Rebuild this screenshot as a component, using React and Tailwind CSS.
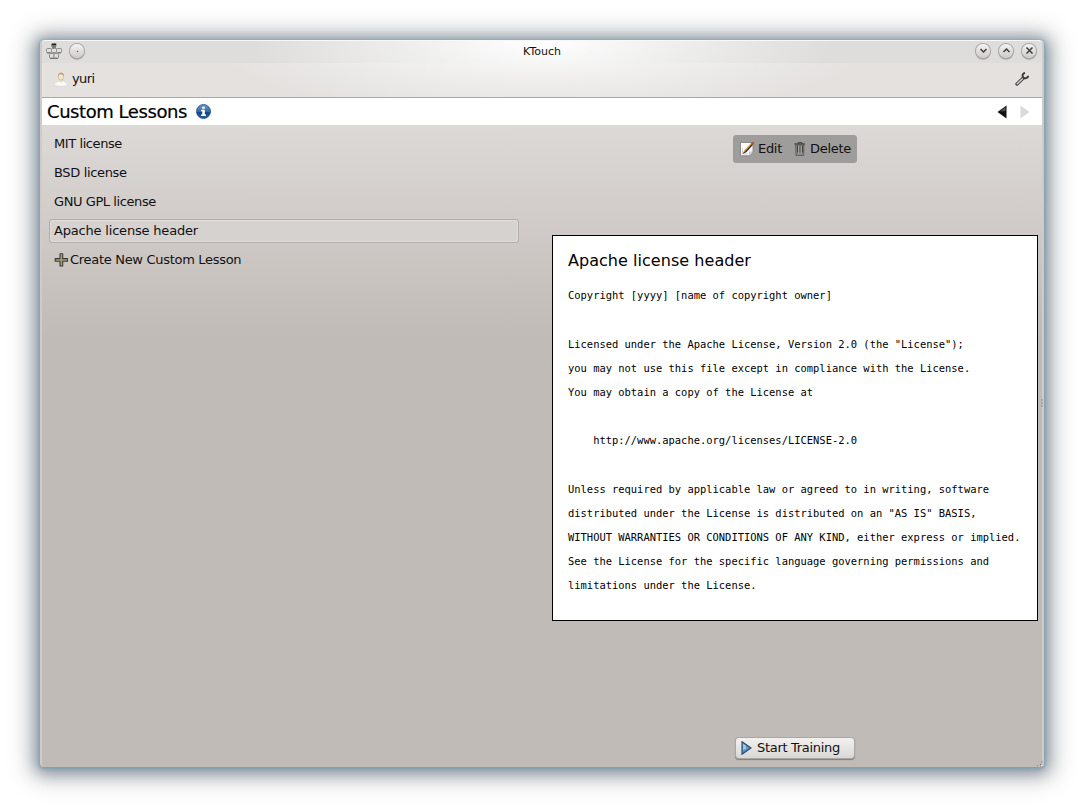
import React from "react";

const lessons = [
  { name: "MIT license", tracking: "tracking-[-0.42px]" },
  { name: "BSD license", tracking: "tracking-[-0.35px]" },
  { name: "GNU GPL license", tracking: "tracking-[-0.42px]" },
  { name: "Apache license header", tracking: "tracking-[-0.19px]", selected: true },
];

const licenseText = `Copyright [yyyy] [name of copyright owner]

Licensed under the Apache License, Version 2.0 (the "License");
you may not use this file except in compliance with the License.
You may obtain a copy of the License at

    http://www.apache.org/licenses/LICENSE-2.0

Unless required by applicable law or agreed to in writing, software
distributed under the License is distributed on an "AS IS" BASIS,
WITHOUT WARRANTIES OR CONDITIONS OF ANY KIND, either express or implied.
See the License for the specific language governing permissions and
limitations under the License.`;

function TitleButton({ children }) {
  return (
    <button className="flex size-[14px] items-center justify-center rounded-full bg-linear-to-b from-[#f4f3f3] to-[#cecbc9] shadow-[0_0_0_1px_#aaa8a7,0_1px_1px_0.5px_#8d8b8a]">
      <svg width="15" height="15" viewBox="0 0 15 15" fill="none" stroke="#3c3c3c" strokeWidth="1.5" className="shrink-0">
        {children}
      </svg>
    </button>
  );
}

function KeyboardIcon() {
  return (
    <svg width="16" height="16" viewBox="0 0 16 16" fill="#e0dfde" stroke="#8e8c89" strokeWidth="1">
      <path d="M6 .5h4v2L9 5H7L5.500 2.500Z" fill="#77756f" stroke="#777570" />
      <path d="M6 1.500h4" stroke="#222" />
      <rect x="0.5" y="5.5" width="5" height="4" rx="0.8" />
      <rect x="5.5" y="5.5" width="5" height="4" rx="0.8" />
      <rect x="10.5" y="5.5" width="5" height="4" rx="0.8" />
      <rect x="3.5" y="10.5" width="4.5" height="4.500" rx="0.8" />
      <rect x="8" y="10.5" width="4.5" height="4.500" rx="0.8" />
      <path d="M1 10h3M12 10h3M4 15.500h8" stroke="#777572" />
    </svg>
  );
}

function UserIcon() {
  return (
    <svg width="14" height="16" viewBox="0 0 14 16">
      <path d="M.5 14.800C.5 11 4 10.500 5.500 9.800h3C10 10.500 13.500 11 13.500 14.800Q7 16 .5 14.800Z" fill="#fafafa" stroke="#d2d0cd" strokeWidth="0.6" />
      <path d="M5.600 8h2.800v2.500L7 12l-1.400-1.500Z" fill="#eadfc6" />
      <ellipse cx="7" cy="5.500" rx="2.700" ry="3.700" fill="#f3e7cf" stroke="#c5b182" strokeWidth="0.700" />
      <path d="M4.300 5.500C3.500.6 10.500.3 9.800 5.500 9 3 6.500 3.500 5.500 3.300Z" fill="#b49d68" />
    </svg>
  );
}

function InfoIcon() {
  return (
    <svg width="15" height="15" viewBox="0 0 15 15">
      <defs>
        <linearGradient id="info" x2="0" y2="1">
          <stop stopColor="#6b9cc0" />
          <stop offset="0.5" stopColor="#336e9e" />
          <stop offset="0.55" stopColor="#15477f" />
          <stop offset="1" stopColor="#28609c" />
        </linearGradient>
      </defs>
      <circle cx="7.500" cy="7.500" r="7" fill="url(#info)" stroke="#1c4a7c" strokeWidth="0.8" />
      <path d="M6.200 2.700h2.600v2H6.200ZM5 5.700h3.800v4.800H10V12H5v-1.500h1.300V7.200H5Z" fill="#fff" />
    </svg>
  );
}

function WrenchIcon() {
  return (
    <svg width="14" height="14" viewBox="0 0 14 14" fill="none">
      <path d="M2 12 8 6.200" stroke="#444" strokeWidth="3.300" strokeLinecap="round" />
      <path d="M2.200 11.800 8.300 6" stroke="#d6d5d3" strokeWidth="1.400" strokeLinecap="round" />
      <path d="M10 1C8 1.200 7.300 3 7.700 4.300 8 6 9.500 6.700 11 6.100 12.400 5.700 13.100 4.900 13.200 3.800" stroke="#3b3b3b" strokeWidth="1.900" />
    </svg>
  );
}

function EditIcon() {
  return (
    <svg width="16" height="16" viewBox="0 0 16 16">
      <path d="M1.500 1.500h12.500v9.500l-3.500 3.800h-9Z" fill="#fafafa" stroke="#787878" strokeWidth="0.8" />
      <path d="M10.500 14.800V11H14Z" fill="#e4e4e4" stroke="#999" strokeWidth="0.500" />
      <path d="M3.500 7v6h4M6 13h3" stroke="#d5d5d5" fill="none" />
      <path d="M3.700 13 5.500 9.500l7-7.300 1.700 1.400L7.500 11Z" fill="#2d2419" />
      <path d="m5 10.700 7.500-8.200" stroke="#dba24c" strokeWidth="1.300" />
      <path d="m12 2 1.500-1.300 1.700.3-.2 1.500-1.600 1.600Z" fill="#a65d2b" />
    </svg>
  );
}

function TrashIcon() {
  return (
    <svg width="12" height="14" viewBox="0 0 12 14" fill="none">
      <path d="M4 1.500V.6h4v.9" stroke="#444" />
      <path d="M.5 2h10.500" stroke="#333" strokeWidth="1.200" />
      <path d="M1.700 3h8.300l-.3 10.500H2Z" fill="#858583" stroke="#555" strokeWidth="0.8" />
      <path d="M3.500 3.500v7M6 3.500v7M8.500 3.500v7" stroke="#3c3c3c" strokeWidth="0.900" />
      <path d="M4.700 3.500V12M7.200 3.500V12" stroke="#adadab" strokeWidth="0.800" />
    </svg>
  );
}

export default function App() {
  return (
    <div className="h-[807px] w-[1084px] overflow-hidden bg-white p-10 font-['DejaVu_Sans',sans-serif] text-[13px] text-[#111]">
      <div className="relative flex h-[727px] w-[1004px] flex-col rounded-[4px] border-x-2 border-l-[#cfcbc8] border-r-[#cfcbc8] bg-[#c1bbb7] bg-[linear-gradient(to_bottom,#dedddb_0px,#e4e1df_58px,#dcd9d7_86px,#d3cecc_165px,#c5bfbb_265px,#c1bbb7_300px)] shadow-[0_1px_3px_1px_#7fa1b4,0_2px_15px_4px_rgba(75,98,118,0.6),0_2px_26px_10px_rgba(0,0,0,0.2)]">
        <header className="flex h-[23px] shrink-0 items-start rounded-t-[4px] border-t border-[#f8f8f8] bg-[#dfdddc] bg-[radial-gradient(ellipse_290px_90px_at_50%_0,#ffffff,#ededec_50%,transparent)] px-1">
          <div className="flex h-[20px] w-[80px] items-center gap-[8px]">
            <KeyboardIcon />
            <TitleButton><circle cx="7.500" cy="7.500" r="0.700" fill="#555" stroke="none" /></TitleButton>
          </div>
          <div className="flex-1 text-center text-[11px] leading-[22px]">KTouch</div>
          <div className="flex h-[19px] w-[80px] items-center justify-end gap-[9px] pr-[2px]">
            <TitleButton><path d="m4.500 6 3 3 3-3" /></TitleButton>
            <TitleButton><path d="m4.500 9 3-3 3 3" /></TitleButton>
            <TitleButton><path d="m4.500 4.500 6 6m0-6-6 6" /></TitleButton>
          </div>
        </header>

        <div className="flex h-[35px] shrink-0 items-start justify-between border-b border-[#aaa8a6] bg-[#e4e1df] bg-[radial-gradient(ellipse_330px_75px_at_50%_-20px,#ffffff,#efeeed_50%,transparent)] pr-[13px] pl-[12px]">
          <div className="flex h-[31px] items-center gap-[4px]">
            <UserIcon />
            <span className="tracking-[-0.6px]">yuri</span>
          </div>
          <div className="flex h-[31px] items-center"><WrenchIcon /></div>
        </div>

        <div className="flex h-[27px] shrink-0 items-center justify-between bg-white pr-[12px] pl-[5px]">
          <div className="flex items-center gap-[9px] text-black">
            <h1 className="text-[18px] leading-[26px] tracking-[-0.44px] [-webkit-text-stroke:0.2px_black]">Custom Lessons</h1>
            <InfoIcon />
          </div>
          <div className="flex items-center gap-[13px]">
            <svg width="10" height="14" viewBox="0 0 10 14">
              <path d="M.5 7 9.500.5v13Z" fill="#111" />
              <path d="M3 6.500 8.500 2v4Z" fill="#555" />
            </svg>
            <svg width="10" height="14" viewBox="0 0 10 14">
              <path d="M.5.5 9.500 7l-9 6.500Z" fill="#dadada" />
            </svg>
          </div>
        </div>

        <main className="flex min-h-0 flex-1">
          <ul className="flex w-[510px] flex-col gap-[5px] pt-[7px] pl-[7px]">
            {lessons.map(({ name, tracking, selected }) => (
              <li
                key={name}
                className={
                  selected
                    ? "flex h-6 w-[470px] items-center rounded-[3px] border border-[#b0acaa] bg-[#d6d2d0] px-1 shadow-[inset_0_0_0_1px_#dfdcda]"
                    : "flex h-6 w-[470px] items-center px-[5px]"
                }
              >
                <span className={tracking}>{name}</span>
              </li>
            ))}
            <li className="flex h-6 items-center gap-[1px] pl-[5px]">
              <svg width="15" height="15" viewBox="0 0 15 15">
                <path d="M6 .8h2.700v4.800h4.800v2.600H8.700V13H6V8.200H1.200V5.600H6Z" fill="#a39c7d" stroke="#3f3e38" strokeWidth="1.100" strokeLinejoin="round" />
              </svg>
              <span className="tracking-[-0.3px]">Create New Custom Lesson</span>
            </li>
          </ul>

          <section className="flex w-[486px] flex-col items-center pt-[10px]">
            <div className="flex h-7 w-[124px] items-center rounded-[3px] bg-[#9f9d9b] pl-[6px]">
              <EditIcon />
              <span className="ml-[3px] w-[24px] tracking-[-0.3px]">Edit</span>
              <span className="ml-[12px]"><TrashIcon /></span>
              <span className="ml-[4px] tracking-[-0.3px]">Delete</span>
            </div>
            <article className="mt-[72px] h-[386px] w-[486px] border border-black bg-white pt-[13px] pl-[15px] text-black">
              <h2 className="text-[16px] leading-[24px] tracking-[0.04px]">Apache license header</h2>
              <pre className="mt-[10.400px] font-['DejaVu_Sans_Mono',monospace] text-[10.450px] leading-[24.170px]">{licenseText}</pre>
            </article>
            <button className="mt-[117px] flex h-[20px] w-[118px] items-center gap-[5px] rounded-[3px] bg-linear-to-b from-[#f2f1f0] to-[#dad8d6] pl-[5px] shadow-[0_0_0_1px_#aaa6a3,0_1px_1px_1px_#817c78]">
              <svg width="11" height="14" viewBox="0 0 11 14">
                <path d="M1 .8 10 7l-9 6.200Z" fill="#5c93bf" stroke="#234568" strokeWidth="1.100" />
                <path d="M2 2.500 5 4.700v3L2 9Z" fill="#a5c5dc" />
              </svg>
              <span className="tracking-[-0.3px]">Start Training</span>
            </button>
          </section>
        </main>

        <svg className="absolute right-[-1px] bottom-0" width="6" height="6" viewBox="0 0 6 6">
          <path d="M0 5h1.500M3 5h1M3 3.500h1.500M4 1h1.500" stroke="#85817e" />
          <path d="M1 6h1.500M4 4.500h1.500" stroke="#f0efee" />
        </svg>
        <svg className="absolute top-[359px] right-[-1px]" width="2" height="9" viewBox="0 0 2 9">
          <path d="M0 1h2M0 4h2M0 7h2" stroke="#8d8986" />
        </svg>
      </div>
    </div>
  );
}
